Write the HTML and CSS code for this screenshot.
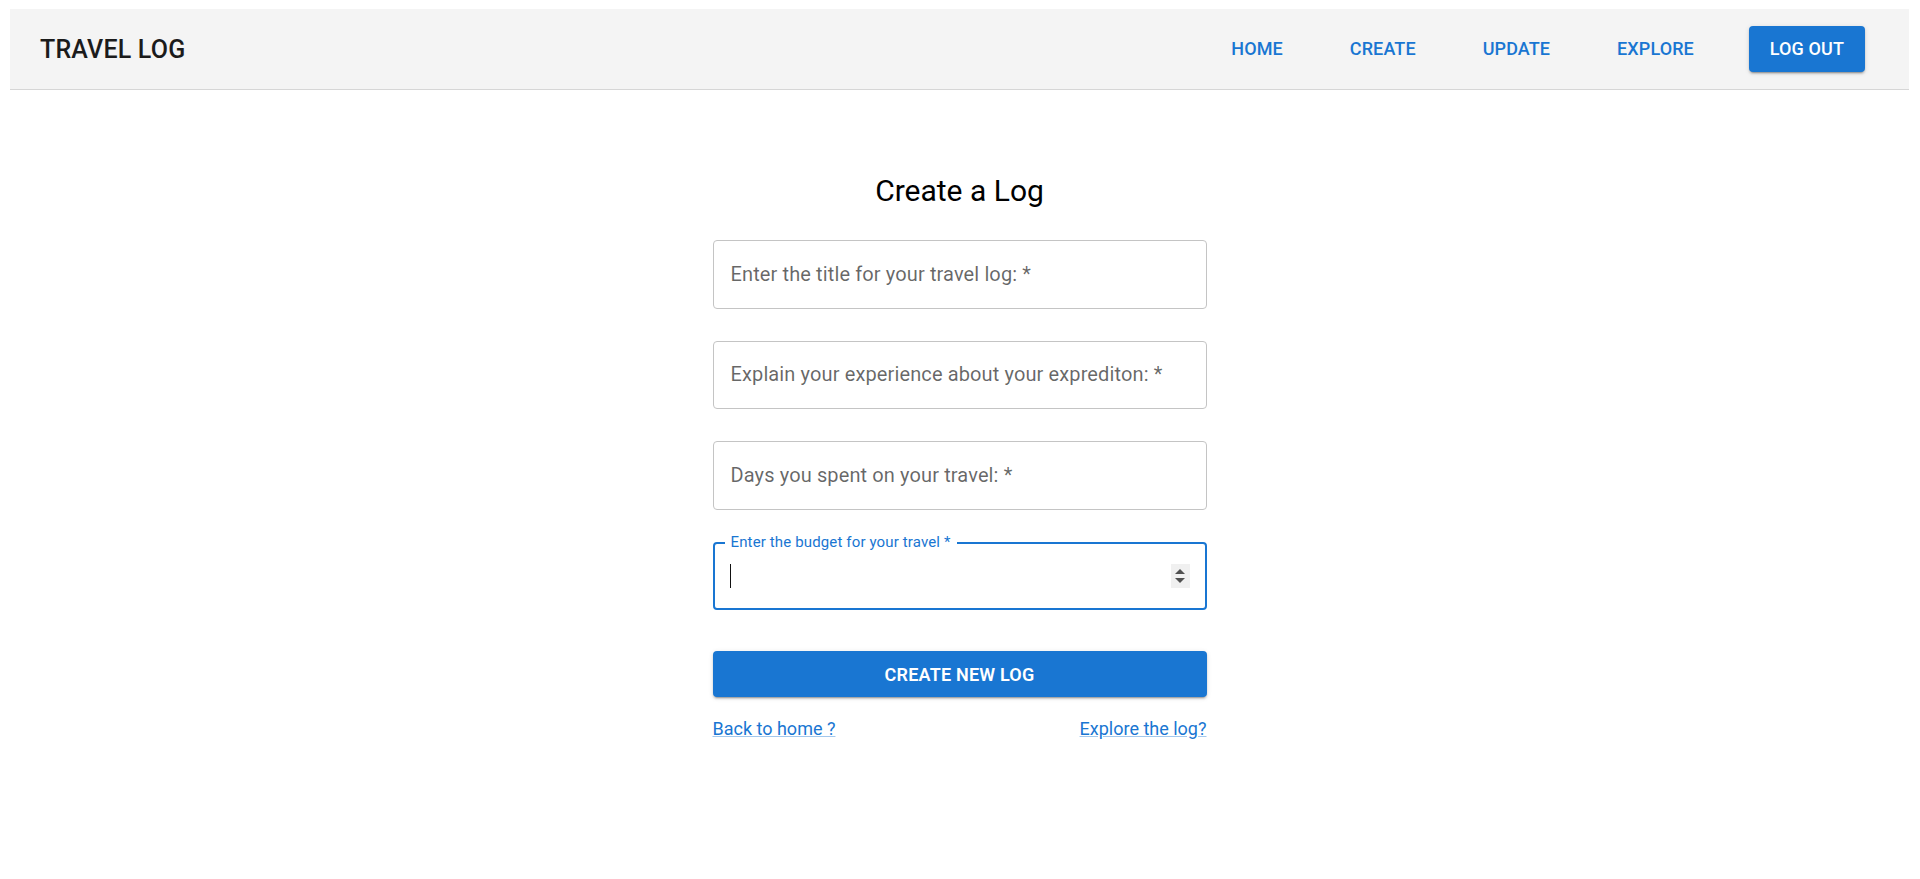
FILE: index.html
```html
<!DOCTYPE html>
<html lang="en">
<head>
<meta charset="utf-8">
<title>Travel Log</title>
<link rel="stylesheet" href="styles.css">
</head>
<body>
<header class="appbar">
  <div class="brand">TRAVEL LOG</div>
  <nav class="nav">
    <a class="nav-link" href="#">HOME</a>
    <a class="nav-link" href="#">CREATE</a>
    <a class="nav-link" href="#">UPDATE</a>
    <a class="nav-link" href="#">EXPLORE</a>
    <a class="logout" href="#">LOG OUT</a>
  </nav>
</header>
<main class="main">
  <h1 class="title">Create a Log</h1>
  <form class="form">
    <div class="field"><span class="placeholder">Enter the title for your travel log: *</span></div>
    <div class="field"><span class="placeholder">Explain your experience about your exprediton: *</span></div>
    <div class="field"><span class="placeholder">Days you spent on your travel: *</span></div>
    <div class="field field-focused">
      <span class="float-label">Enter the budget for your travel *</span>
      <span class="caret"></span>
      <span class="spinner"><span class="tri-up"></span><span class="tri-down"></span></span>
    </div>
    <button type="button" class="submit">CREATE NEW LOG</button>
    <div class="links">
      <a href="#" class="link">Back to home ?</a>
      <a href="#" class="link">Explore the log?</a>
    </div>
  </form>
</main>
</body>
</html>
```
FILE: styles.css
```css
* { box-sizing: border-box; }
html, body { background: #fff; }
body {
  margin: 9px 11px 0 10px;
  font-family: Roboto, "Noto Sans", Arial, sans-serif;
  color: rgba(0,0,0,0.87);
}
.appbar {
  height: 81px;
  background: #f4f4f4;
  border-bottom: 1px solid #d6d6d6;
  display: flex;
  align-items: center;
  justify-content: space-between;
  padding: 0 44px 0 30px;
}
.brand {
  font-size: 25px;
  font-weight: 500;
  color: #1b1b1b;
  letter-spacing: 0.19px;
}
.nav {
  display: flex;
  align-items: center;
  gap: 27px;
}
.nav-link {
  color: #1976d2;
  text-decoration: none;
  font-size: 18px;
  font-weight: 500;
  letter-spacing: 0.1px;
  padding: 12px 20px;
  line-height: 22px;
}
.logout {
  margin-left: 8px;
  background: #1976d2;
  color: #fff;
  text-decoration: none;
  font-size: 18px;
  font-weight: 500;
  letter-spacing: 0.1px;
  height: 46px;
  line-height: 46px;
  padding: 0 21px;
  border-radius: 4px;
  box-shadow: 0 3px 1px -2px rgba(0,0,0,0.2), 0 2px 2px 0 rgba(0,0,0,0.14), 0 1px 5px 0 rgba(0,0,0,0.12);
}
.main {
  display: flex;
  flex-direction: column;
  align-items: center;
}
.title {
  margin: 83px 0 0;
  font-size: 30px;
  font-weight: 400;
  line-height: normal;
  color: #000;
}
.form {
  width: 494px;
  margin-top: 32px;
  display: flex;
  flex-direction: column;
}
.field {
  position: relative;
  height: 68.5px;
  border: 1px solid #c4c4c4;
  border-radius: 4px;
  display: flex;
  align-items: center;
  padding: 0 17px;
  margin-bottom: 32px;
}
.placeholder {
  font-size: 20px;
  letter-spacing: 0.12px;
  color: rgba(0,0,0,0.6);
  margin-top: -1px;
}
.field-focused {
  border: 2px solid #1976d2;
  padding: 0 15px 0 15px;
  justify-content: space-between;
  margin-bottom: 41px;
}
.float-label {
  position: absolute;
  top: -10px;
  left: 10px;
  padding: 0 6px;
  background: #fff;
  font-size: 15px;
  letter-spacing: 0.14px;
  line-height: 17px;
  color: #1976d2;
}
.caret {
  width: 1.5px;
  height: 24px;
  background: #111;
}
.spinner {
  width: 19px;
  height: 24px;
  background: #f0f0f0;
  display: flex;
  flex-direction: column;
  align-items: center;
  justify-content: center;
  gap: 4px;
}
.tri-up {
  width: 0; height: 0;
  border-left: 5px solid transparent;
  border-right: 5px solid transparent;
  border-bottom: 5px solid #505050;
}
.tri-down {
  width: 0; height: 0;
  border-left: 5px solid transparent;
  border-right: 5px solid transparent;
  border-top: 5px solid #505050;
}
.submit {
  height: 46px;
  border: none;
  border-radius: 4px;
  background: #1976d2;
  color: #fff;
  font-family: inherit;
  font-size: 18px;
  font-weight: 600;
  letter-spacing: 0.2px;
  box-shadow: 0 3px 1px -2px rgba(0,0,0,0.2), 0 2px 2px 0 rgba(0,0,0,0.14), 0 1px 5px 0 rgba(0,0,0,0.12);
  cursor: pointer;
}
.links {
  margin-top: 21px;
  display: flex;
  justify-content: space-between;
}
.link {
  font-size: 18px;
  color: #1976d2;
  text-decoration: underline;
  text-decoration-color: rgba(25,118,210,0.4);
}
```
